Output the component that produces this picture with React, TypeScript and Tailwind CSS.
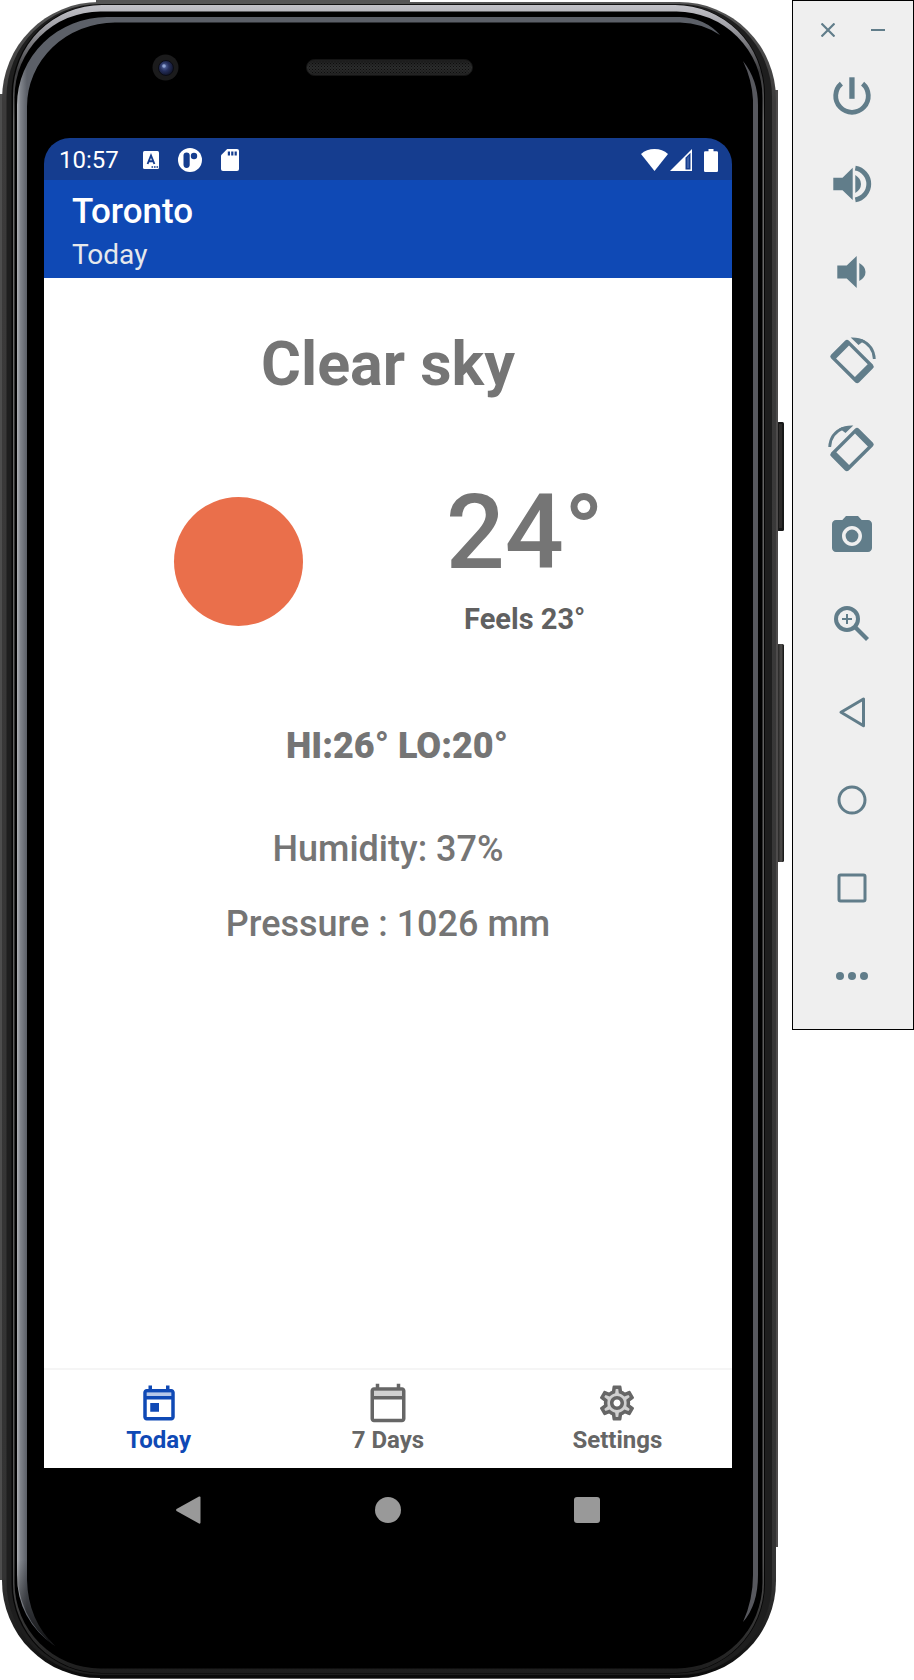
import type { ReactNode } from "react";
import { MdOutlineSettings, MdPhotoCamera, MdSettings } from "react-icons/md";

function DeviceFrame() {
  return (
    <svg
      className="absolute inset-0 h-full w-full"
      viewBox="0 0 792 1680"
      preserveAspectRatio="none"
      aria-hidden="true"
    >
      <defs>
        <linearGradient id="edge" x1="0" y1="0" x2="0" y2="1">
          <stop offset="0" stopColor="#565656" />
          <stop offset="0.06" stopColor="#3c3b3b" />
          <stop offset="0.94" stopColor="#333" />
          <stop offset="1" stopColor="#0a0a0a" />
        </linearGradient>
        <linearGradient id="rim" x1="0" y1="0" x2="0" y2="1">
          <stop offset="0" stopColor="#c2c2c8" />
          <stop offset="0.012" stopColor="#a4a4aa" />
          <stop offset="0.04" stopColor="#3a3a3c" />
          <stop offset="0.07" stopColor="#6a6a6a" />
          <stop offset="0.93" stopColor="#555" />
          <stop offset="1" stopColor="#1d1d1d" />
        </linearGradient>
        <linearGradient id="glass" gradientUnits="userSpaceOnUse" x1="17" y1="0" x2="27" y2="0">
          <stop offset="0" stopColor="#aeb0b5" />
          <stop offset="0.35" stopColor="#80848b" />
          <stop offset="1" stopColor="#5c6068" />
        </linearGradient>
        <linearGradient id="fade" x1="0" y1="0" x2="0" y2="1">
          <stop offset="0" stopColor="#000" stopOpacity="0" />
          <stop offset="1" stopColor="#000" stopOpacity="0.85" />
        </linearGradient>
        <linearGradient id="speaker" x1="0" y1="0" x2="0" y2="1">
          <stop offset="0" stopColor="#1c1c1c" />
          <stop offset="0.5" stopColor="#2c2d2d" />
          <stop offset="1" stopColor="#222" />
        </linearGradient>
        <linearGradient id="key" x1="0" y1="0" x2="1" y2="0">
          <stop offset="0" stopColor="#1a1a1a" />
          <stop offset="0.6" stopColor="#514f4d" />
          <stop offset="1" stopColor="#111" />
        </linearGradient>
        <radialGradient id="lens" cx="0.4" cy="0.4" r="0.6">
          <stop offset="0" stopColor="#5b6ea8" />
          <stop offset="0.5" stopColor="#252f5c" />
          <stop offset="1" stopColor="#12162c" />
        </radialGradient>
        <pattern id="mesh" width="3" height="3" patternUnits="userSpaceOnUse">
          <rect width="1" height="1" fill="#0d0d0d" />
          <rect x="1.5" y="1.5" width="1" height="1" fill="#0d0d0d" />
        </pattern>
      </defs>

      <rect x="777" y="422" width="7" height="109" rx="1.5" fill="#181818" />
      <rect x="779" y="424" width="3" height="104" fill="#2d2b2a" />
      <rect x="777" y="644" width="7" height="218" rx="1.5" fill="url(#key)" />

      <path d="M0 94H4V1580H0Z" fill="#4d4d4d" />
      <path d="M774 90H778V1547H774Z" fill="#4d4b4b" />
      <path d="M96 0H410V3H96Z M100 1677H670V1679H100Z" fill="#555" />
      <rect x="2" y="2" width="774" height="1676" rx="97" fill="url(#edge)" />
      <rect x="6.5" y="4" width="765.5" height="1671" rx="93" fill="#1e1e1e" />
      <rect x="11.5" y="4.5" width="753.5" height="1669" rx="90" fill="#050505" />
      <rect x="13" y="5" width="751" height="1668" rx="89" fill="url(#rim)" />
      <rect x="14.5" y="11.5" width="748" height="1657" rx="86" fill="#000" />
      <path
        d="M17 1575V105A90 88 0 0 1 107 17H680Q705 18 720 35Q702 23 680 22.5H115A88 84 0 0 0 27 107V1580Q28 1620 55 1646Q17 1620 17 1575Z"
        fill="url(#glass)"
      />
      <path d="M16 1560H28Q28 1620 56 1647Q16 1620 16 1560Z" fill="url(#fade)" />
      <path
        d="M743 61Q758 80 758 105V1575Q758 1605 743 1622Q753 1600 753 1575V100Q752 80 743 61Z"
        fill="#57585e"
      />

      <circle cx="165.5" cy="67.5" r="13" fill="#1b1b1c" />
      <circle cx="166" cy="68" r="7.5" fill="url(#lens)" stroke="#0b0c14" />
      <circle cx="164" cy="66" r="1.8" fill="#8fa3d2" />
      <rect x="306.5" y="59.5" width="166" height="16" rx="8" fill="url(#speaker)" stroke="#141414" />
      <rect x="308" y="61" width="163" height="13" rx="6.5" fill="url(#mesh)" />
    </svg>
  );
}

function StatusBar() {
  return (
    <div className="flex h-[42px] items-center rounded-t-[26px] bg-[#153d8f] pt-0.5 pr-3.5 pl-[15px] text-white">
      <time className="text-2xl leading-7">10:57</time>
      <div className="ml-6 flex flex-1 items-center gap-[19px]">
        <svg className="h-[18px] w-4" viewBox="0 0 16 18" aria-hidden="true">
          <rect width="16" height="18" rx="1.5" fill="#fff" />
          <path d="M4.6 13L8 4.500L11.400 13M5.800 10.300H10.200" fill="none" stroke="#153d8f" strokeWidth="1.9" />
          <path d="M8.500 15.200h1.600v1.600H8.500zM11 15.200h1.600v1.600H11zM13.500 15.200h1.600v1.600h-1.600z" fill="#153d8f" />
        </svg>
        <svg className="size-6" viewBox="0 0 24 24" aria-hidden="true">
          <circle cx="12" cy="12" r="12" fill="#fff" />
          <rect x="5.5" y="4.5" width="6.2" height="15.4" rx="3.1" fill="#153d8f" />
          <circle cx="16" cy="8" r="3.2" fill="#153d8f" />
        </svg>
        <svg className="h-[22px] w-[18px]" viewBox="0 0 18 22" aria-hidden="true">
          <path d="M6.200 0H16Q18 0 18 2V20Q18 22 16 22H2Q0 22 0 20V6.200Z" fill="#fff" />
          <path d="M6.800 2.500h2.200v4H6.800zM10.200 2.500h2.200v4h-2.200zM13.600 2.500h2.200v4h-2.200z" fill="#153d8f" />
        </svg>
      </div>
      <div className="flex items-center">
        <svg className="h-[22px] w-[27px]" viewBox="0 0 27 22" aria-hidden="true">
          <path d="M0 5Q5.500 0 13.500 0T27 5L13.500 22Z" fill="#fff" />
        </svg>
        <svg className="ml-0.5 size-[22px]" viewBox="0 0 22 22" aria-hidden="true">
          <path d="M0 22L22 0V22Z" fill="#fff" />
          <path d="M15.500 8.800L20.500 3.800V20.500H15.500Z" fill="#153d8f" />
          <path d="M17 8.800L19 6.800V19H17Z" fill="#3b5ea6" />
        </svg>
        <svg className="ml-3 h-[23px] w-3.5" viewBox="0 0 14 23" aria-hidden="true">
          <path d="M4.500 0H9.500V2.300H12.700Q14 2.300 14 3.600V21.700Q14 23 12.700 23H1.300Q0 23 0 21.700V3.600Q0 2.300 1.300 2.300H4.500Z" fill="#fff" />
        </svg>
      </div>
    </div>
  );
}

function TodayIcon() {
  return (
    <svg className="size-[42px]" viewBox="0 0 24 24" fill="currentColor" aria-hidden="true">
      <path d="M5 6h14v2H5z" opacity="0.3" />
      <path d="M19 4h-1V2h-2v2H8V2H6v2H5c-1.110 0-1.990.9-1.990 2L3 20c0 1.100.89 2 2 2h14c1.100 0 2-.9 2-2V6c0-1.100-.9-2-2-2zm0 16H5V10h14v10zm0-12H5V6h14v2zM7 12h5v5H7z" />
    </svg>
  );
}

function CalendarIcon() {
  return (
    <svg className="size-[42px]" viewBox="0 0 24 24" fill="currentColor" aria-hidden="true">
      <path d="M4 5h16v3H4z" opacity="0.3" />
      <path d="M20 3h-1V1h-2v2H7V1H5v2H4c-1.100 0-2 .9-2 2v16c0 1.100.9 2 2 2h16c1.100 0 2-.9 2-2V5c0-1.100-.9-2-2-2zm0 18H4V10h16v11zm0-13H4V5h16v3z" />
    </svg>
  );
}

function SettingsIcon() {
  return (
    <svg className="size-[42px]" viewBox="0 0 24 24" aria-hidden="true">
      <MdSettings size={24} opacity={0.3} />
      <MdOutlineSettings size={24} />
    </svg>
  );
}

function Tab({ icon, label, active = false }: { icon: ReactNode; label: string; active?: boolean }) {
  return (
    <button
      type="button"
      aria-current={active ? "page" : undefined}
      className={
        active
          ? "flex flex-1 flex-col items-center gap-0.5 pt-3 text-[#0f49b5]"
          : "flex flex-1 flex-col items-center gap-0.5 pt-3 text-[#666]"
      }
    >
      {icon}
      <span className="text-2xl leading-7 font-bold">{label}</span>
    </button>
  );
}

function Weather() {
  return (
    <main className="flex flex-1 flex-col bg-white text-center text-[#757575]">
      <h2 className="pt-[50px] text-[61px] leading-[72px] font-bold">Clear sky</h2>
      <div className="mt-[73px] grid grid-cols-2 pr-16 pl-[51px]">
        <div className="flex justify-center pt-6">
          <div className="size-[129px] rounded-full bg-[#ea6f4b]" role="img" aria-label="Sun" />
        </div>
        <div>
          <p className="text-[104px] leading-[120px] font-medium">24°</p>
          <p className="mt-2 text-[29px] leading-9 font-bold text-[#606060]">Feels 23°</p>
        </div>
      </div>
      <p className="mt-[87px] pl-[18px] text-[36px] leading-[44px] font-black">HI:26° LO:20°</p>
      <p className="mt-[59px] text-[36px] leading-[44px] font-medium">Humidity: 37%</p>
      <p className="mt-[31px] text-[36px] leading-[44px] font-medium">Pressure : 1026 mm</p>
    </main>
  );
}

function SystemNav() {
  return (
    <div className="flex h-[84px] items-center justify-center">
      <button type="button" aria-label="Back" className="flex w-[199px] justify-center">
        <svg className="size-7" viewBox="0 0 28 28" fill="#999" aria-hidden="true">
          <path d="M24 0.500Q25.500 0 25.500 1.500V26.500Q25.500 28 24 27.500L1.500 15Q0.500 14 1.500 13Z" />
        </svg>
      </button>
      <button type="button" aria-label="Home" className="flex w-[199px] justify-center">
        <span className="size-[26px] rounded-full bg-[#999]" />
      </button>
      <button type="button" aria-label="Recent apps" className="flex w-[199px] justify-center">
        <span className="size-[26px] rounded-[3px] bg-[#999]" />
      </button>
    </div>
  );
}

function Phone() {
  return (
    <div className="relative flex min-h-screen min-w-0 flex-1 flex-col">
      <DeviceFrame />
      <div className="relative flex flex-1 flex-col pt-[138px] pr-[60px] pb-32 pl-11">
        <StatusBar />
        <header className="bg-[#0f49b5] px-7 pt-3 pb-[5px]">
          <h1 className="text-[35px] leading-10 font-medium text-white">Toronto</h1>
          <p className="mt-[5px] text-[28px] leading-9 text-[#e6e8ec]">Today</p>
        </header>
        <Weather />
        <nav className="flex h-[100px] border-t-2 border-[#f5f5f5] bg-white">
          <Tab active label="Today" icon={<TodayIcon />} />
          <Tab label="7 Days" icon={<CalendarIcon />} />
          <Tab label="Settings" icon={<SettingsIcon />} />
        </nav>
        <SystemNav />
      </div>
    </div>
  );
}

function Glyph({ children }: { children: ReactNode }) {
  return (
    <svg className="size-12 overflow-visible" viewBox="0 0 48 48" fill="currentColor" aria-hidden="true">
      {children}
    </svg>
  );
}

function RotateShape() {
  return (
    <>
      <path
        fillRule="evenodd"
        d="M3 18.800L17 4.800Q19 2.800 21 4.800L44.800 28.600Q46.600 30.600 44.800 32.600L31 46.400Q29.200 48 27.300 46.400L3 22.200Q1.400 20.500 3 18.800ZM8.100 22.400L26.900 41.100L39.700 28.300L21 9.500Z"
      />
      <path d="M33 4.200C41 7.500 46 14.500 46.300 23" fill="none" stroke="currentColor" strokeWidth="2.8" />
      <path d="M22.700 1.600Q31 1.200 37 4.800L33.800 6.600L30.500 9Z" />
    </>
  );
}

const tools: { label: string; icon: ReactNode }[] = [
  {
    label: "Power",
    icon: (
      <Glyph>
        <path d="M13.400 11.600A16.300 16.300 0 1 0 34.600 11.600" fill="none" stroke="currentColor" strokeWidth="4.8" />
        <rect x="21.3" y="5.3" width="5.3" height="21.5" />
      </Glyph>
    ),
  },
  {
    label: "Volume up",
    icon: (
      <Glyph>
        <path d="M5.300 17.700H14.500L24.700 7.700V40L14.500 30.300H5.300ZM27.300 15Q33 18.500 33 24T27.300 33Z" />
        <path d="M27.300 8.200A16 16 0 0 1 27.300 39.800" fill="none" stroke="currentColor" strokeWidth="4.8" />
      </Glyph>
    ),
  },
  {
    label: "Volume down",
    icon: (
      <Glyph>
        <path d="M9.300 17.500H18.700L28.700 8V40L18.700 30.500H9.300ZM31.300 15Q37.500 18.500 37.500 24T31.300 33Z" />
      </Glyph>
    ),
  },
  { label: "Rotate left", icon: <Glyph><RotateShape /></Glyph> },
  {
    label: "Rotate right",
    icon: (
      <Glyph>
        <g transform="translate(48 0) scale(-1 1)">
          <RotateShape />
        </g>
      </Glyph>
    ),
  },
  { label: "Take screenshot", icon: <MdPhotoCamera className="size-12" /> },
  {
    label: "Zoom",
    icon: (
      <Glyph>
        <g fill="none" stroke="currentColor">
          <circle cx="19" cy="19" r="11" strokeWidth="4" />
          <path d="M27.500 27.500L39.500 39.500" strokeWidth="4.2" />
          <path d="M19 14V24M14 19H24" strokeWidth="2" />
        </g>
      </Glyph>
    ),
  },
  {
    label: "Back",
    icon: (
      <Glyph>
        <path d="M13 24.300L35.500 11V37.700Z" fill="none" stroke="currentColor" strokeWidth="3" strokeLinejoin="round" />
      </Glyph>
    ),
  },
  {
    label: "Home",
    icon: (
      <Glyph>
        <circle cx="24" cy="24" r="13" fill="none" stroke="currentColor" strokeWidth="3" />
      </Glyph>
    ),
  },
  {
    label: "Overview",
    icon: (
      <Glyph>
        <rect x="11" y="11" width="26" height="26" rx="1.5" fill="none" stroke="currentColor" strokeWidth="3" />
      </Glyph>
    ),
  },
  {
    label: "More",
    icon: (
      <Glyph>
        <circle cx="12" cy="24" r="4" />
        <circle cx="24" cy="24" r="4" />
        <circle cx="36" cy="24" r="4" />
      </Glyph>
    ),
  },
];

function EmulatorToolbar() {
  return (
    <aside className="flex w-[122px] shrink-0 flex-col border border-black bg-[#efefef] pr-0.5 pb-[9px] text-[#617d8a]">
      <div className="flex h-[51px] items-center justify-center gap-9 pt-1.5 pl-0.5">
        <button type="button" aria-label="Close">
          <svg className="size-3.5" viewBox="0 0 14 14" stroke="currentColor" strokeWidth="2.2" aria-hidden="true">
            <path d="M0.500 0.500L13.500 13.500M13.500 0.500L0.500 13.500" />
          </svg>
        </button>
        <button type="button" aria-label="Minimize">
          <svg className="size-3.5" viewBox="0 0 14 14" stroke="currentColor" strokeWidth="2" aria-hidden="true">
            <path d="M0 7H14" />
          </svg>
        </button>
      </div>
      {tools.map((tool) => (
        <button
          key={tool.label}
          type="button"
          aria-label={tool.label}
          className="flex h-[88px] items-center justify-center"
        >
          {tool.icon}
        </button>
      ))}
    </aside>
  );
}

export default function App() {
  return (
    <div className="flex min-h-screen items-start bg-white font-[Roboto,sans-serif]">
      <Phone />
      <EmulatorToolbar />
    </div>
  );
}
